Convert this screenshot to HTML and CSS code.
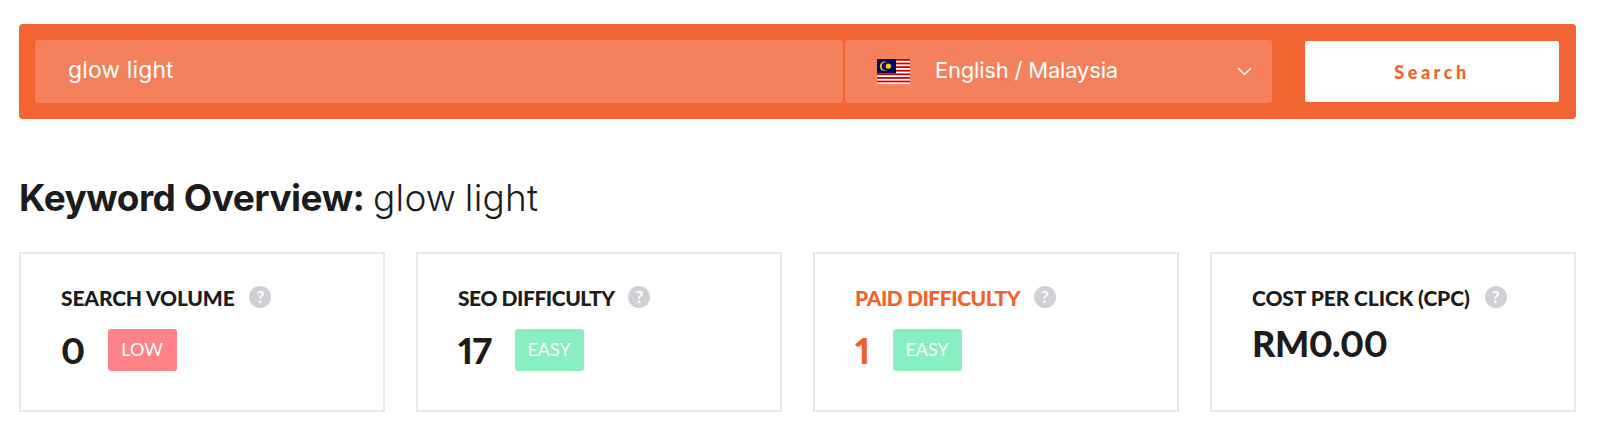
FILE: index.html
```html
<!DOCTYPE html>
<html lang="en">
<head>
    <meta charset="UTF-8">
    <title>keyword overview</title>
    <link rel="stylesheet" href="styles.css">
</head>
<body>
    <div class="container">
        <form class="searchbar">
            <div class="keyword">glow light</div>
            <div class="locale">
                <svg class="flag" width="33" height="25" viewBox="0 0 33 25">
                    <rect width="33" height="25" fill="#fff"/>
                    <g fill="#cc0001">
                        <rect y="0" width="33" height="1.8"/>
                        <rect y="3.6" width="33" height="1.8"/>
                        <rect y="7.2" width="33" height="1.8"/>
                        <rect y="10.8" width="33" height="1.8"/>
                        <rect y="14.4" width="33" height="1.8"/>
                        <rect y="18" width="33" height="1.8"/>
                        <rect y="21.6" width="33" height="1.8"/>
                    </g>
                    <rect width="19" height="14.4" fill="#010066"/>
                    <circle cx="7.4" cy="7.2" r="4.6" fill="#ffcc00"/>
                    <circle cx="8.6" cy="7.2" r="3.9" fill="#010066"/>
                    <circle cx="11.4" cy="7.2" r="2.6" fill="#ffcc00"/>
                </svg>
                <span class="locale-name">English / Malaysia</span>
                <svg class="chevron" width="15" height="9" viewBox="0 0 15 9">
                    <path d="M1 1l6.5 6.5L14 1" fill="none" stroke="#fff" stroke-width="1.5"/>
                </svg>
            </div>
            <button type="button" class="btn">Search</button>
        </form>

        <h1 class="title"><b>Keyword Overview:</b> glow light</h1>

        <div class="cards">
            <div class="card volume">
                <div class="label">SEARCH VOLUME <span class="help">?</span></div>
                <div class="row"><span class="num">0</span><span class="tag low">LOW</span></div>
            </div>
            <div class="card">
                <div class="label">SEO DIFFICULTY <span class="help">?</span></div>
                <div class="row"><span class="num">17</span><span class="tag easy">EASY</span></div>
            </div>
            <div class="card paid">
                <div class="label">PAID DIFFICULTY <span class="help">?</span></div>
                <div class="row"><span class="num">1</span><span class="tag easy">EASY</span></div>
            </div>
            <div class="card cpc">
                <div class="label">COST PER CLICK (CPC) <span class="help">?</span></div>
                <div class="row"><span class="num">RM0.00</span></div>
            </div>
        </div>
    </div>
</body>
</html>
```

FILE: styles.css
```css
* { margin: 0px; padding: 0px; box-sizing: border-box; }

body {
    background: white;
    font-family: "Lato", "Liberation Sans", sans-serif;
    color: #1c1c1c;
}

.container {
    width: 1557px;
    margin-left: 19px;
    padding-top: 24px;
}

.searchbar {
    display: flex;
    align-items: center;
    height: 95px;
    padding: 0 17px 0 16px;
    background: #f36433;
    border-radius: 4px;
}

.keyword {
    width: 808px;
    height: 63px;
    padding-left: 33px;
    background: #f4805c;
    border-radius: 3px;
    color: white;
    font-family: "Inter", sans-serif;
    font-size: 23px;
    line-height: 61px;
    letter-spacing: 0.1px;
}

.locale {
    display: flex;
    align-items: center;
    width: 427px;
    height: 63px;
    margin-left: 2px;
    padding: 0 20px 0 32px;
    background: #f4805c;
    border-radius: 3px;
    color: white;
}

.locale-name {
    flex: 1;
    margin-left: 25px;
    padding-bottom: 3px;
    font-family: "Inter", sans-serif;
    font-size: 22px;
    letter-spacing: -0.2px;
}

.btn {
    width: 254px;
    height: 61px;
    margin-left: 33px;
    background: white;
    border: none;
    border-radius: 2px;
    color: #f4602a;
    font-family: "Lato", sans-serif;
    font-weight: 900;
    font-size: 18px;
    letter-spacing: 3.5px;
}

.title {
    margin-top: 57px;
    font-family: "Inter", sans-serif;
    font-size: 37px;
    font-weight: 300;
    line-height: 44px;
    letter-spacing: 0.2px;
    word-spacing: -2px;
}

.title b {
    font-weight: 700;
    letter-spacing: -0.5px;
    word-spacing: 0;
}

.cards {
    display: grid;
    grid-template-columns: repeat(4, 366px);
    justify-content: space-between;
    margin-top: 32px;
}

.card {
    height: 160px;
    padding: 31px 0 0 40px;
    border: 2px solid #e8e9ee;
}

.label {
    display: flex;
    align-items: center;
    height: 24px;
    font-size: 21px;
    font-weight: 900;
    letter-spacing: -0.45px;
    white-space: pre;
}

.volume .label { letter-spacing: -0.15px; }
.cpc .label { letter-spacing: -0.1px; }

.help {
    width: 22px;
    height: 22px;
    margin-left: 10px;
    border-radius: 50%;
    background: #cfd0d3;
    color: white;
    font-size: 17px;
    font-weight: 700;
    line-height: 22px;
    text-align: center;
}

.row {
    display: flex;
    align-items: center;
    height: 42px;
    margin-top: 20px;
}

.num {
    font-size: 36px;
    font-weight: 900;
    font-variant-numeric: proportional-nums;
    letter-spacing: -0.5px;
    margin-right: 23px;
}

.tag {
    width: 69px;
    height: 42px;
    border-radius: 3px;
    color: white;
    font-size: 18px;
    line-height: 41px;
    text-align: center;
}

.low { background: #ff8387; }
.easy { background: #88efc0; }

.paid .label, .paid .num { color: #f4602a; }

.cpc .row { margin-top: 13px; }
```
